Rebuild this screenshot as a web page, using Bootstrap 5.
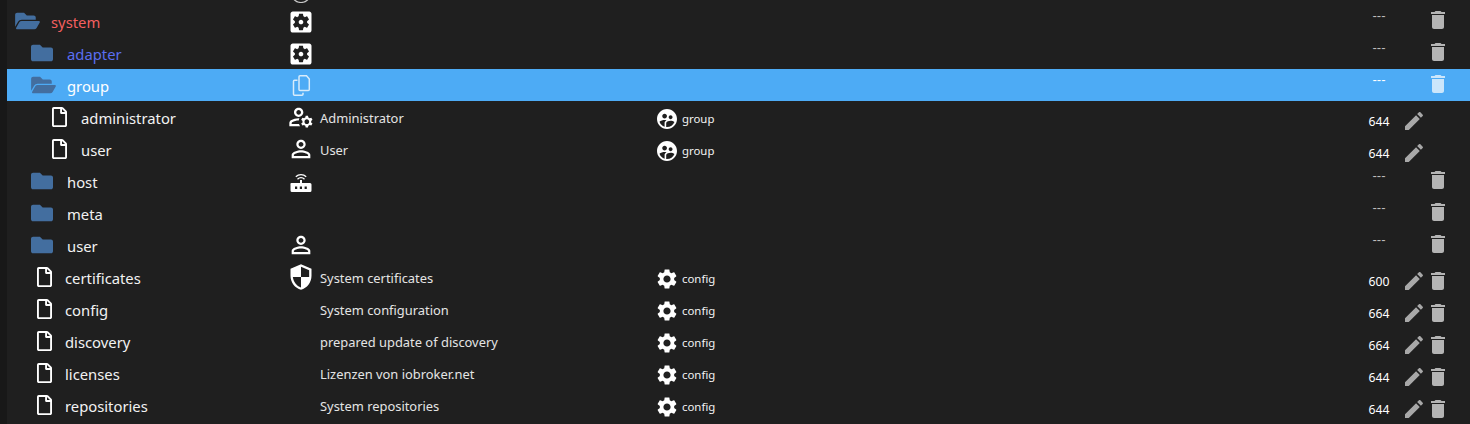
<!DOCTYPE html>
<html lang="en">
<head>
<meta charset="UTF-8">
<title>Objects</title>
<link href="https://cdn.jsdelivr.net/npm/bootstrap@5.3.3/dist/css/bootstrap.min.css" rel="stylesheet">
<style>
    html,body{height:100%;overflow:hidden}
    body{background:#181818;font-family:"Noto Sans","Open Sans",sans-serif;color:#fff}
    .tree-pane{margin-left:7px;height:424px;background:#1f1f1f;overflow:hidden}
    .tree-list{margin-top:-27px}
    .obj-row{height:32px;color:#f2f2f2}
    .obj-row.is-picked{background:#4dabf5;color:#fff}
    .obj-row.is-picked .act-ico{fill:#cbe6fb}
    .obj-row.is-picked .dash-txt{color:#fff}
    .cell-name{width:280px;font-size:14.8px;padding-top:2px}
    .cell-ico{width:28px}
    .cell-desc{width:340px;padding-left:5px;padding-top:4px;font-size:12.9px;color:#e4e4e4}
    .cell-type{font-size:11.4px;gap:3px;color:#f2f2f2;padding-top:3px}
    .cell-perm{width:38px;font-size:12.2px;padding-top:10px;text-align:center;color:#fff}
    .cell-perm.dash-txt{font-family:"Liberation Sans",sans-serif;font-size:13px;padding-top:0;margin-top:-10px;color:#bdbdbd}
    .cell-edit{width:28px;padding-left:4px}
    .cell-del{width:24px;margin-right:20px}
    .lvl-0{padding-left:8px}
    .lvl-1{padding-left:24px}
    .lvl-f1{padding-left:30px}
    .lvl-f2{padding-left:45px}
    .dir-box{width:36px}
    .doc-box{width:28px}
    .doc-box2{width:29px}
    .dir-ico{fill:#436e9f;height:22px;display:block;margin-top:-2px}
    .doc-ico{fill:#fff;width:15px;height:20px;display:block;margin-top:-2px}
    .act-ico{fill:#b4b4b4;width:24px;height:24px;display:block}
    .act-edit{fill:#a8a8a8}
    .col-ico{fill:#fff;width:28px;height:28px;display:block}
    .box-ico{margin-top:2px}
    .type-ico{fill:#fff;width:24px;height:24px;display:block}
    .txt-red{color:#f45f5f}
    .txt-blue{color:#5a6ef0}
    .down-4{margin-top:7px}
    .up-1{margin-top:-3px}
</style>
</head>
<body>
<svg width="0" height="0" class="d-none" aria-hidden="true">
    <symbol id="i-folder" viewBox="0 0 512 512"><path d="M464 128H272l-64-64H48C21.49 64 0 85.49 0 112v288c0 26.51 21.49 48 48 48h416c26.51 0 48-21.49 48-48V176c0-26.51-21.49-48-48-48z"/></symbol>
    <symbol id="i-open" viewBox="0 0 576 512"><path d="M572.694 292.093L500.27 416.248A63.997 63.997 0 0 1 444.989 448H45.025c-18.523 0-30.064-20.093-20.731-36.093l72.424-124.155A64 64 0 0 1 152 256h399.964c18.523 0 30.064 20.093 20.73 36.093zM152 224h328v-48c0-26.51-21.49-48-48-48H272l-64-64H48C21.49 64 0 85.49 0 112v278.046l69.077-118.418C86.214 242.25 117.989 224 152 224z"/></symbol>
    <symbol id="i-file" viewBox="0 0 384 512"><path d="M369.9 97.9L286 14C277 5 264.8-.1 252.1-.1H48C21.5 0 0 21.5 0 48v416c0 26.5 21.5 48 48 48h288c26.5 0 48-21.5 48-48V131.9c0-12.7-5.1-25-14.1-34zM332.1 128H256V51.9l76.1 76.1zM48 464V48h160v104c0 13.3 10.7 24 24 24h104v288H48z"/></symbol>
    <symbol id="i-del" viewBox="0 0 24 24"><path d="M6 19c0 1.1.9 2 2 2h8c1.1 0 2-.9 2-2V7H6v12zM19 4h-3.5l-1-1h-5l-1 1H5v2h14V4z"/></symbol>
    <symbol id="i-edit" viewBox="0 0 24 24"><path d="M3 17.25V21h3.75L17.81 9.94l-3.75-3.75L3 17.25zM20.71 7.04c.39-.39.39-1.02 0-1.41l-2.34-2.34c-.39-.39-1.02-.39-1.41 0l-1.83 1.83 3.75 3.75 1.83-1.83z"/></symbol>
    <symbol id="i-gear" viewBox="0 0 24 24"><path d="M19.14 12.94c.04-.3.06-.61.06-.94 0-.32-.02-.64-.07-.94l2.03-1.58c.18-.14.23-.41.12-.61l-1.92-3.32c-.12-.22-.37-.29-.59-.22l-2.39.96c-.5-.38-1.03-.7-1.62-.94l-.36-2.54c-.04-.24-.24-.41-.48-.41h-3.84c-.24 0-.43.17-.47.41l-.36 2.54c-.59.24-1.13.57-1.62.94l-2.39-.96c-.22-.08-.47 0-.59.22L2.74 8.87c-.12.21-.08.47.12.61l2.03 1.58c-.05.3-.09.63-.09.94s.02.64.07.94l-2.03 1.58c-.18.14-.23.41-.12.61l1.92 3.32c.12.22.37.29.59.22l2.39-.96c.5.38 1.03.7 1.62.94l.36 2.54c.05.24.24.41.48.41h3.84c.24 0 .44-.17.47-.41l.36-2.54c.59-.24 1.13-.56 1.62-.94l2.39.96c.22.08.47 0 .59-.22l1.92-3.32c.12-.22.07-.47-.12-.61l-2.01-1.58zM12 15.6c-1.98 0-3.6-1.62-3.6-3.6s1.62-3.6 3.6-3.6 3.6 1.62 3.6 3.6-1.62 3.6-3.6 3.6z"/></symbol>
    <symbol id="i-gearbox" viewBox="0 0 24 24"><path d="M12 10c-1.1 0-2 .9-2 2s.9 2 2 2 2-.9 2-2-.9-2-2-2zm7-7H5c-1.11 0-2 .9-2 2v14c0 1.1.89 2 2 2h14c1.11 0 2-.9 2-2V5c0-1.1-.89-2-2-2zm-1.75 9c0 .23-.02.46-.05.68l1.48 1.16c.13.11.17.3.08.45l-1.4 2.42c-.09.15-.27.21-.43.15l-1.74-.7c-.36.28-.76.51-1.18.69l-.26 1.85c-.03.17-.18.3-.35.3h-2.8c-.17 0-.32-.13-.35-.29l-.26-1.85c-.43-.18-.82-.41-1.18-.69l-1.74.7c-.16.06-.34 0-.43-.15l-1.4-2.42c-.09-.15-.05-.34.08-.45l1.48-1.16c-.03-.23-.05-.46-.05-.69 0-.23.02-.46.05-.68l-1.48-1.16c-.13-.11-.17-.3-.08-.45l1.4-2.42c.09-.15.27-.21.43-.15l1.74.7c.36-.28.76-.51 1.18-.69l.26-1.85c.03-.17.18-.3.35-.3h2.8c.17 0 .32.13.35.29l.26 1.85c.43.18.82.41 1.18.69l1.74-.7c.16-.06.34 0 .43.15l1.4 2.42c.09.15.05.34-.08.45l-1.48 1.16c.03.23.05.46.05.69z"/></symbol>
    <symbol id="i-group" viewBox="0 0 24 24"><path d="M12 2C6.48 2 2 6.48 2 12s4.48 10 10 10 10-4.48 10-10S17.52 2 12 2zm3.61 6.34c1.07 0 1.93.86 1.93 1.93 0 1.07-.86 1.93-1.93 1.93-1.07 0-1.93-.86-1.93-1.93-.01-1.07.86-1.93 1.93-1.93zm-6-1.58c1.3 0 2.36 1.06 2.36 2.36 0 1.3-1.06 2.36-2.36 2.36s-2.36-1.06-2.36-2.36c0-1.31 1.05-2.36 2.36-2.36zm0 9.13v3.75c-2.4-.75-4.3-2.6-5.14-4.96 1.05-1.12 3.67-1.69 5.14-1.69.53 0 1.2.08 1.9.22-1.64.87-1.9 2.02-1.9 2.68zM11.99 20c-.27 0-.53-.01-.79-.04v-4.07c0-1.42 2.94-2.13 4.4-2.13 1.07 0 2.92.39 3.84 1.15-1.17 2.97-4.06 5.09-7.45 5.09z"/></symbol>
    <symbol id="i-person" viewBox="0 0 24 24"><path d="M12 5.9c1.16 0 2.1.94 2.1 2.1s-.94 2.1-2.1 2.1S9.9 9.16 9.9 8s.94-2.1 2.1-2.1m0 9c2.97 0 6.1 1.46 6.1 2.1v1.1H5.9V17c0-.64 3.13-2.1 6.1-2.1M12 4C9.79 4 8 5.79 8 8s1.79 4 4 4 4-1.79 4-4-1.79-4-4-4zm0 9c-2.67 0-8 1.34-8 4v3h16v-3c0-2.66-5.33-4-8-4z"/></symbol>
    <symbol id="i-admin" viewBox="0 0 24 24"><path d="M4 18v-.65c0-.34.16-.66.41-.81C6.1 15.53 8.03 15 10 15c.03 0 .05 0 .08.01.1-.7.3-1.37.59-1.98-.22-.02-.44-.03-.67-.03-2.42 0-4.68.67-6.61 1.82-.88.52-1.39 1.5-1.39 2.53V20h9.26c-.42-.6-.75-1.28-.97-2H4zM10 12c2.21 0 4-1.79 4-4s-1.79-4-4-4-4 1.79-4 4 1.79 4 4 4zm0-6c1.1 0 2 .9 2 2s-.9 2-2 2-2-.9-2-2 .9-2 2-2zM20.75 16c0-.22-.03-.42-.06-.63l1.14-1.01-1-1.73-1.45.49c-.32-.27-.68-.48-1.08-.63L18 11h-2l-.3 1.49c-.4.15-.76.36-1.08.63l-1.45-.49-1 1.73 1.14 1.01c-.03.21-.06.41-.06.63s.03.42.06.63l-1.14 1.01 1 1.73 1.45-.49c.32.27.68.48 1.08.63L16 21h2l.3-1.49c.4-.15.76-.36 1.08-.63l1.45.49 1-1.73-1.14-1.01c.03-.21.06-.41.06-.63zM17 18c-1.1 0-2-.9-2-2s.9-2 2-2 2 .9 2 2-.9 2-2 2z"/></symbol>
    <symbol id="i-shield" viewBox="0 0 24 24"><path transform="matrix(-1 0 0 1 24 0)" d="M12 1L3 5v6c0 5.55 3.84 10.74 9 12 5.16-1.26 9-6.45 9-12V5l-9-4zm0 10.99h7c-.53 4.12-3.28 7.79-7 8.94V12H5V6.3l7-3.11v8.8z"/></symbol>
</svg>

<div class="tree-pane">
  <div class="tree-list">

    <div class="obj-row d-flex align-items-center">
        <div class="cell-name"></div>
        <div class="cell-ico">
            <svg class="col-ico" viewBox="0 0 28 28"><circle cx="14" cy="18" r="9.5" fill="#1f1f1f" stroke="#c8c8c8" stroke-width="1.2"/></svg>
        </div>
    </div>

    <div class="obj-row d-flex align-items-center">
        <div class="cell-name lvl-0 d-flex align-items-center txt-red">
            <div class="dir-box"><svg class="dir-ico" width="25"><use href="#i-open"/></svg></div>system
        </div>
        <div class="cell-ico"><svg class="col-ico box-ico"><use href="#i-gearbox"/></svg></div>
        <div class="cell-desc"></div>
        <div class="cell-type d-flex align-items-center flex-grow-1"></div>
        <div class="cell-perm dash-txt">---</div>
        <div class="cell-edit"></div>
        <div class="cell-del up-1"><svg class="act-ico"><use href="#i-del"/></svg></div>
    </div>

    <div class="obj-row d-flex align-items-center">
        <div class="cell-name lvl-1 d-flex align-items-center txt-blue">
            <div class="dir-box"><svg class="dir-ico" width="22"><use href="#i-folder"/></svg></div>adapter
        </div>
        <div class="cell-ico"><svg class="col-ico box-ico"><use href="#i-gearbox"/></svg></div>
        <div class="cell-desc"></div>
        <div class="cell-type d-flex align-items-center flex-grow-1"></div>
        <div class="cell-perm dash-txt">---</div>
        <div class="cell-edit"></div>
        <div class="cell-del up-1"><svg class="act-ico"><use href="#i-del"/></svg></div>
    </div>

    <div class="obj-row is-picked d-flex align-items-center">
        <div class="cell-name lvl-1 d-flex align-items-center">
            <div class="dir-box"><svg class="dir-ico" width="25"><use href="#i-open"/></svg></div>group
        </div>
        <div class="cell-ico">
            <svg class="col-ico" viewBox="0 0 28 28" style="fill:none" stroke="#d8ecfb" stroke-width="1.5">
                <path d="M13 4.800h6.500l2.800 3.200v10.500a1 1 0 0 1-1 1h-8.300a1 1 0 0 1-1-1v-12.700a1 1 0 0 1 1-1z"/>
                <path d="M10.500 9.200H7.500a1 1 0 0 0-1 1v13a1 1 0 0 0 1 1h7.500a1 1 0 0 0 1-1v-1.500"/>
            </svg>
        </div>
        <div class="cell-desc"></div>
        <div class="cell-type d-flex align-items-center flex-grow-1"></div>
        <div class="cell-perm dash-txt">---</div>
        <div class="cell-edit"></div>
        <div class="cell-del up-1"><svg class="act-ico"><use href="#i-del"/></svg></div>
    </div>

    <div class="obj-row d-flex align-items-center">
        <div class="cell-name lvl-f2 d-flex align-items-center">
            <div class="doc-box2"><svg class="doc-ico"><use href="#i-file"/></svg></div>administrator
        </div>
        <div class="cell-ico"><svg class="col-ico"><use href="#i-admin"/></svg></div>
        <div class="cell-desc">Administrator</div>
        <div class="cell-type d-flex align-items-center flex-grow-1"><svg class="type-ico"><use href="#i-group"/></svg>group</div>
        <div class="cell-perm">644</div>
        <div class="cell-edit down-4"><svg class="act-ico act-edit"><use href="#i-edit"/></svg></div>
        <div class="cell-del"></div>
    </div>

    <div class="obj-row d-flex align-items-center">
        <div class="cell-name lvl-f2 d-flex align-items-center">
            <div class="doc-box2"><svg class="doc-ico"><use href="#i-file"/></svg></div>user
        </div>
        <div class="cell-ico"><svg class="col-ico"><use href="#i-person"/></svg></div>
        <div class="cell-desc">User</div>
        <div class="cell-type d-flex align-items-center flex-grow-1"><svg class="type-ico"><use href="#i-group"/></svg>group</div>
        <div class="cell-perm">644</div>
        <div class="cell-edit down-4"><svg class="act-ico act-edit"><use href="#i-edit"/></svg></div>
        <div class="cell-del"></div>
    </div>

    <div class="obj-row d-flex align-items-center">
        <div class="cell-name lvl-1 d-flex align-items-center">
            <div class="dir-box"><svg class="dir-ico" width="22"><use href="#i-folder"/></svg></div>host
        </div>
        <div class="cell-ico">
            <svg class="col-ico" viewBox="0 0 28 28">
                <path fill-rule="evenodd" d="M4.500 16H13v-3h2v3h8a1.500 1.500 0 0 1 1.500 1.500v6A1.500 1.500 0 0 1 23 25H5a1.500 1.500 0 0 1-1.500-1.500v-6A1 1 0 0 1 4.500 16zM8 19.500v2.500h2.200v-2.500zm4.800 0v2.500h2.200v-2.500zm4.800 0v2.500h2.200v-2.500z"/>
                <path d="M10.500 12.200a4.800 4.800 0 0 1 7 0M8.800 9.800a7.500 7.500 0 0 1 10.400 0" fill="none" stroke="#fff" stroke-width="1.300"/>
            </svg>
        </div>
        <div class="cell-desc"></div>
        <div class="cell-type d-flex align-items-center flex-grow-1"></div>
        <div class="cell-perm dash-txt">---</div>
        <div class="cell-edit"></div>
        <div class="cell-del up-1"><svg class="act-ico"><use href="#i-del"/></svg></div>
    </div>

    <div class="obj-row d-flex align-items-center">
        <div class="cell-name lvl-1 d-flex align-items-center">
            <div class="dir-box"><svg class="dir-ico" width="22"><use href="#i-folder"/></svg></div>meta
        </div>
        <div class="cell-ico"></div>
        <div class="cell-desc"></div>
        <div class="cell-type d-flex align-items-center flex-grow-1"></div>
        <div class="cell-perm dash-txt">---</div>
        <div class="cell-edit"></div>
        <div class="cell-del up-1"><svg class="act-ico"><use href="#i-del"/></svg></div>
    </div>

    <div class="obj-row d-flex align-items-center">
        <div class="cell-name lvl-1 d-flex align-items-center">
            <div class="dir-box"><svg class="dir-ico" width="22"><use href="#i-folder"/></svg></div>user
        </div>
        <div class="cell-ico"><svg class="col-ico"><use href="#i-person"/></svg></div>
        <div class="cell-desc"></div>
        <div class="cell-type d-flex align-items-center flex-grow-1"></div>
        <div class="cell-perm dash-txt">---</div>
        <div class="cell-edit"></div>
        <div class="cell-del up-1"><svg class="act-ico"><use href="#i-del"/></svg></div>
    </div>

    <div class="obj-row d-flex align-items-center">
        <div class="cell-name lvl-f1 d-flex align-items-center">
            <div class="doc-box"><svg class="doc-ico"><use href="#i-file"/></svg></div>certificates
        </div>
        <div class="cell-ico"><svg class="col-ico"><use href="#i-shield"/></svg></div>
        <div class="cell-desc">System certificates</div>
        <div class="cell-type d-flex align-items-center flex-grow-1"><svg class="type-ico"><use href="#i-gear"/></svg>config</div>
        <div class="cell-perm">600</div>
        <div class="cell-edit down-4"><svg class="act-ico act-edit"><use href="#i-edit"/></svg></div>
        <div class="cell-del down-4"><svg class="act-ico"><use href="#i-del"/></svg></div>
    </div>

    <div class="obj-row d-flex align-items-center">
        <div class="cell-name lvl-f1 d-flex align-items-center">
            <div class="doc-box"><svg class="doc-ico"><use href="#i-file"/></svg></div>config
        </div>
        <div class="cell-ico"></div>
        <div class="cell-desc">System configuration</div>
        <div class="cell-type d-flex align-items-center flex-grow-1"><svg class="type-ico"><use href="#i-gear"/></svg>config</div>
        <div class="cell-perm">664</div>
        <div class="cell-edit down-4"><svg class="act-ico act-edit"><use href="#i-edit"/></svg></div>
        <div class="cell-del down-4"><svg class="act-ico"><use href="#i-del"/></svg></div>
    </div>

    <div class="obj-row d-flex align-items-center">
        <div class="cell-name lvl-f1 d-flex align-items-center">
            <div class="doc-box"><svg class="doc-ico"><use href="#i-file"/></svg></div>discovery
        </div>
        <div class="cell-ico"></div>
        <div class="cell-desc">prepared update of discovery</div>
        <div class="cell-type d-flex align-items-center flex-grow-1"><svg class="type-ico"><use href="#i-gear"/></svg>config</div>
        <div class="cell-perm">664</div>
        <div class="cell-edit down-4"><svg class="act-ico act-edit"><use href="#i-edit"/></svg></div>
        <div class="cell-del down-4"><svg class="act-ico"><use href="#i-del"/></svg></div>
    </div>

    <div class="obj-row d-flex align-items-center">
        <div class="cell-name lvl-f1 d-flex align-items-center">
            <div class="doc-box"><svg class="doc-ico"><use href="#i-file"/></svg></div>licenses
        </div>
        <div class="cell-ico"></div>
        <div class="cell-desc">Lizenzen von iobroker.net</div>
        <div class="cell-type d-flex align-items-center flex-grow-1"><svg class="type-ico"><use href="#i-gear"/></svg>config</div>
        <div class="cell-perm">644</div>
        <div class="cell-edit down-4"><svg class="act-ico act-edit"><use href="#i-edit"/></svg></div>
        <div class="cell-del down-4"><svg class="act-ico"><use href="#i-del"/></svg></div>
    </div>

    <div class="obj-row d-flex align-items-center">
        <div class="cell-name lvl-f1 d-flex align-items-center">
            <div class="doc-box"><svg class="doc-ico"><use href="#i-file"/></svg></div>repositories
        </div>
        <div class="cell-ico"></div>
        <div class="cell-desc">System repositories</div>
        <div class="cell-type d-flex align-items-center flex-grow-1"><svg class="type-ico"><use href="#i-gear"/></svg>config</div>
        <div class="cell-perm">644</div>
        <div class="cell-edit down-4"><svg class="act-ico act-edit"><use href="#i-edit"/></svg></div>
        <div class="cell-del down-4"><svg class="act-ico"><use href="#i-del"/></svg></div>
    </div>

  </div>
</div>
</body>
</html>
